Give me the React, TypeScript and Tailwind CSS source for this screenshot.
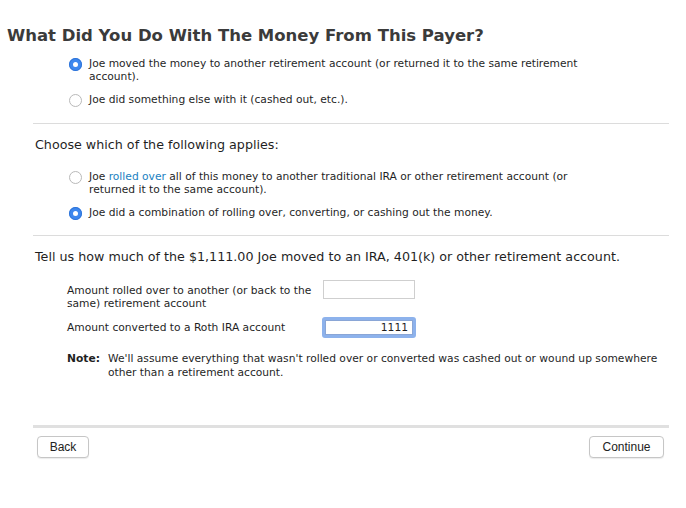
import React from 'react';

const body = "font-['DejaVu_Sans',sans-serif]";

interface RadioRowProps {
  checked?: boolean;
  children: React.ReactNode;
}

function RadioRow({ checked, children }: RadioRowProps) {
  return (
    <div className="flex items-start">
      {checked ? (
        <span className="mt-[1px] flex h-[13px] w-[13px] shrink-0 items-center justify-center rounded-full bg-[#3d87ee] shadow-[inset_0_0_0_1px_#2f74d8]">
          <span className="h-[5px] w-[5px] rounded-full bg-white" />
        </span>
      ) : (
        <span className="mt-[1px] h-[13px] w-[13px] shrink-0 rounded-full border border-[#b9b9b9] bg-white" />
      )}
      <div className="ml-[7px] text-[10.7px] leading-[13px] text-[#1f1f1f]">{children}</div>
    </div>
  );
}

function Field({
  label,
  value,
  focused,
}: {
  label: React.ReactNode;
  value?: string;
  focused?: boolean;
}) {
  return (
    <div className="flex items-start">
      <div className="w-[256px] text-[10.7px] leading-[13px] text-[#1f1f1f]">{label}</div>
      {focused ? (
        <div className="-ml-[1px] -mt-[4px] rounded-[3px] border-[3px] border-[#8db2ec] bg-white">
          <div className="h-[15px] w-[88px] border border-[#8aa6d6] px-[4px] text-right text-[10.7px] leading-[13px] text-[#1f1f1f]">
            {value}
          </div>
        </div>
      ) : (
        <div className="-mt-[4px] h-[19px] w-[92px] border border-[#cfcfcf] bg-white" />
      )}
    </div>
  );
}

export default function App() {
  return (
    <div className={`h-[508px] w-[686px] bg-white ${body}`}>
      <h1 className="pl-[7px] pt-[25px] text-[16.5px] font-bold leading-[22px] text-[#3b3b3b]">
        What Did You Do With The Money From This Payer?
      </h1>

      <div className="ml-[69px] mt-[10px] w-[515px] space-y-[10px]">
        <RadioRow checked>
          Joe moved the money to another retirement account (or returned it to the same retirement
          account).
        </RadioRow>
        <RadioRow>Joe did something else with it (cashed out, etc.).</RadioRow>
      </div>

      <div className="ml-[33px] mr-[17px] mt-[16px] h-px bg-[#dcdcdc]" />

      <p className="ml-[35px] mt-[13px] text-[12.7px] leading-[16px] text-[#1f1f1f]">
        Choose which of the following applies:
      </p>

      <div className="ml-[69px] mt-[17px] w-[515px] space-y-[10px]">
        <RadioRow>
          Joe <span className="text-[#1a7fc1]">rolled over</span> all of this money to another
          traditional IRA or other retirement account (or returned it to the same account).
        </RadioRow>
        <RadioRow checked>
          Joe did a combination of rolling over, converting, or cashing out the money.
        </RadioRow>
      </div>

      <div className="ml-[33px] mr-[17px] mt-[15px] h-px bg-[#dcdcdc]" />

      <p className="ml-[35px] mt-[13px] text-[12.7px] leading-[16px] text-[#1f1f1f]">
        Tell us how much of the $1,111.00 Joe moved to an IRA, 401(k) or other retirement account.
      </p>

      <div className="ml-[67px] mt-[19px] space-y-[11px]">
        <Field label={<>Amount rolled over to another (or back to the same) retirement account</>} />
        <Field label="Amount converted to a Roth IRA account" value="1111" focused />
      </div>

      <div className="ml-[67px] mt-[14px] flex w-[600px] text-[10.7px] leading-[14px] text-[#1f1f1f]">
        <span className="w-[41px] shrink-0 font-bold">Note:</span>
        <span>
          We'll assume everything that wasn't rolled over or converted was cashed out or wound up
          somewhere other than a retirement account.
        </span>
      </div>

      <div className="ml-[33px] mr-[17px] mt-[45px] h-[3px] bg-[#e0e0e0]" />

      <div className="ml-[37px] mr-[22px] mt-[8px] flex justify-between font-['Liberation_Sans',sans-serif] text-[12px] text-[#222]">
        <button className="h-[22px] w-[52px] rounded-[4px] border border-[#c6c6c6] bg-white shadow-[0_1px_1px_rgba(0,0,0,0.08)]">
          Back
        </button>
        <button className="h-[22px] w-[75px] rounded-[4px] border border-[#c6c6c6] bg-white shadow-[0_1px_1px_rgba(0,0,0,0.08)]">
          Continue
        </button>
      </div>
    </div>
  );
}
